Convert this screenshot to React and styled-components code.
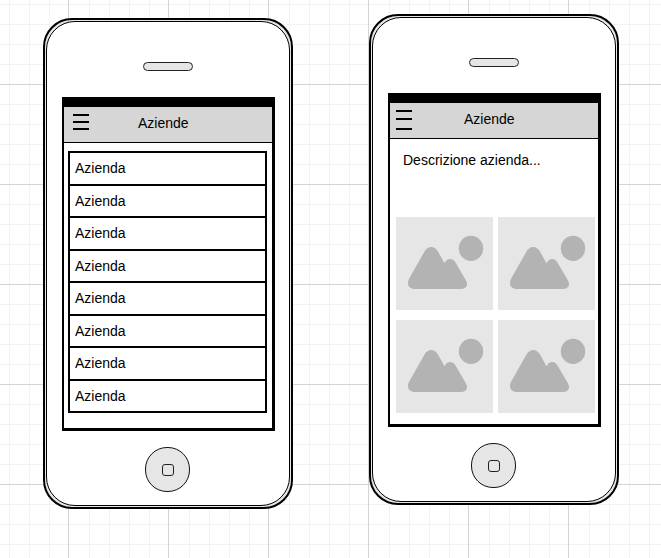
import React from "react";
import styled, { createGlobalStyle } from "styled-components";

const GlobalStyle = createGlobalStyle`
  * { box-sizing: border-box; }
  body { margin: 0; overflow: hidden; background: #fff; }
`;

const minorStops = [21, 41, 61, 81]
  .map((x) => `transparent ${x}px, #f2f2f2 ${x}px, #f2f2f2 ${x + 1}px, transparent ${x + 1}px`)
  .join(", ");

const Canvas = styled.main`
  display: flex;
  align-items: flex-start;
  gap: 76px;
  width: 661px;
  height: 558px;
  padding: 14px 0 0 43px;
  font: 14px/16px "Liberation Sans", Arial, Helvetica, sans-serif;
  color: #000;
  background-color: #fff;
  background-image:
    linear-gradient(to right, #d4d4d4 1px, transparent 1px),
    linear-gradient(to bottom, #d4d4d4 1px, transparent 1px),
    linear-gradient(to right, ${minorStops}),
    linear-gradient(to bottom, #f2f2f2 1px, transparent 1px);
  background-size: 100px 100px, 100px 100px, 100px 100px, 20px 20px;
  background-position: 68px 0, 0 84px, 68px 0, 0 4px;
`;

const PhoneShell = styled.section`
  width: 250px;
  height: 491px;
  margin-top: ${(p) => p.$drop}px;
  padding: 1px;
  border: 2px solid #000;
  border-radius: 29px;
  background: #e6e6e6;
`;

const PhoneFace = styled.div`
  display: flex;
  flex-direction: column;
  align-items: flex-start;
  height: 485px;
  border: 1px solid #000;
  border-radius: 29px;
  background: #fff;
`;

const Speaker = styled.div`
  width: 50px;
  height: 9px;
  margin: 40px 0 0 96px;
  border: 1px solid #222;
  border-radius: 4.5px;
  background: #e6e6e6;
`;

const Screen = styled.div`
  width: 213px;
  height: 334px;
  margin: 26px 0 0 15px;
  border: solid #000;
  border-width: 10px 3px 3px 2px;
  background: #fff;
`;

const HomeButton = styled.div`
  display: flex;
  width: 45px;
  height: 45px;
  margin: 16px 0 0 98px;
  padding: 16px 0 0 16px;
  border: 1px solid #111;
  border-radius: 22px;
  background: #e6e6e6;
`;

const HomeMark = styled.span`
  width: 12px;
  height: 12px;
  border: 1px solid #222;
  border-radius: 3px;
`;

const Header = styled.header`
  display: flex;
  align-items: flex-start;
  height: 36px;
  padding-left: ${(p) => p.$inset}px;
  border-bottom: 1px solid #000;
  background: #d6d6d6;
`;

const MenuIcon = styled.svg`
  display: block;
  flex: none;
  width: 16px;
  height: 36px;
`;

const Title = styled.h1`
  margin: 8px 0 0 ${(p) => p.$gap}px;
  font: inherit;
`;

const List = styled.ul`
  width: 199px;
  margin: 8px 0 0 4px;
  padding: 0;
  border: solid #000;
  border-width: 2px 2px 0;
  list-style: none;
`;

const ListRow = styled.li`
  height: 32px;
  padding: 7px 0 0 5px;
  border-bottom: 2px solid #000;

  &:nth-child(odd) { height: 33px; }
`;

const Description = styled.p`
  height: 65px;
  margin: 13px 0 0 13px;
`;

const Gallery = styled.div`
  display: grid;
  grid-template-columns: 97px 97px;
  grid-auto-rows: 93px;
  gap: 10px 5px;
  padding-left: 6px;
`;

const Picture = styled.svg`
  display: block;
  width: 97px;
  height: 93px;
  background: #e6e6e6;
`;

function Phone({ drop, inset, bars, children }) {
  return (
    <PhoneShell $drop={drop}>
      <PhoneFace>
        <Speaker />
        <Screen>
          <Header $inset={inset}>
            <MenuIcon viewBox="0 0 16 36">
              {bars.map((y) => (
                <rect key={y} y={y} width="16" height="2" />
              ))}
            </MenuIcon>
            <Title $gap={58 - inset}>Aziende</Title>
          </Header>
          {children}
        </Screen>
        <HomeButton>
          <HomeMark />
        </HomeButton>
      </PhoneFace>
    </PhoneShell>
  );
}

function Placeholder() {
  return (
    <Picture viewBox="0 0 97 93" fill="#b3b3b3">
      <ellipse cx="75" cy="31.4" rx="12.2" ry="12.6" />
      <path d="M13.2 61.5L28.500 34.500Q31 30 35.200 30Q39.400 30 42 34.500L48.500 46.300Q50.500 42 54.200 42Q57.500 42 59.800 46L70 63.500Q72 67 70.200 69.800Q68.700 72 65.500 72H19.500Q14.700 72 12.800 69.200Q11 66 13.200 61.500Z" />
    </Picture>
  );
}

export default function App() {
  return (
    <>
      <GlobalStyle />
      <Canvas>
        <Phone drop={4} inset={9} bars={[7, 14, 21]}>
          <List>
            {Array.from({ length: 8 }, (_, i) => (
              <ListRow key={i}>Azienda</ListRow>
            ))}
          </List>
        </Phone>
        <Phone drop={0} inset={6} bars={[7, 15, 25]}>
          <Description>Descrizione azienda...</Description>
          <Gallery>
            <Placeholder />
            <Placeholder />
            <Placeholder />
            <Placeholder />
          </Gallery>
        </Phone>
      </Canvas>
    </>
  );
}
